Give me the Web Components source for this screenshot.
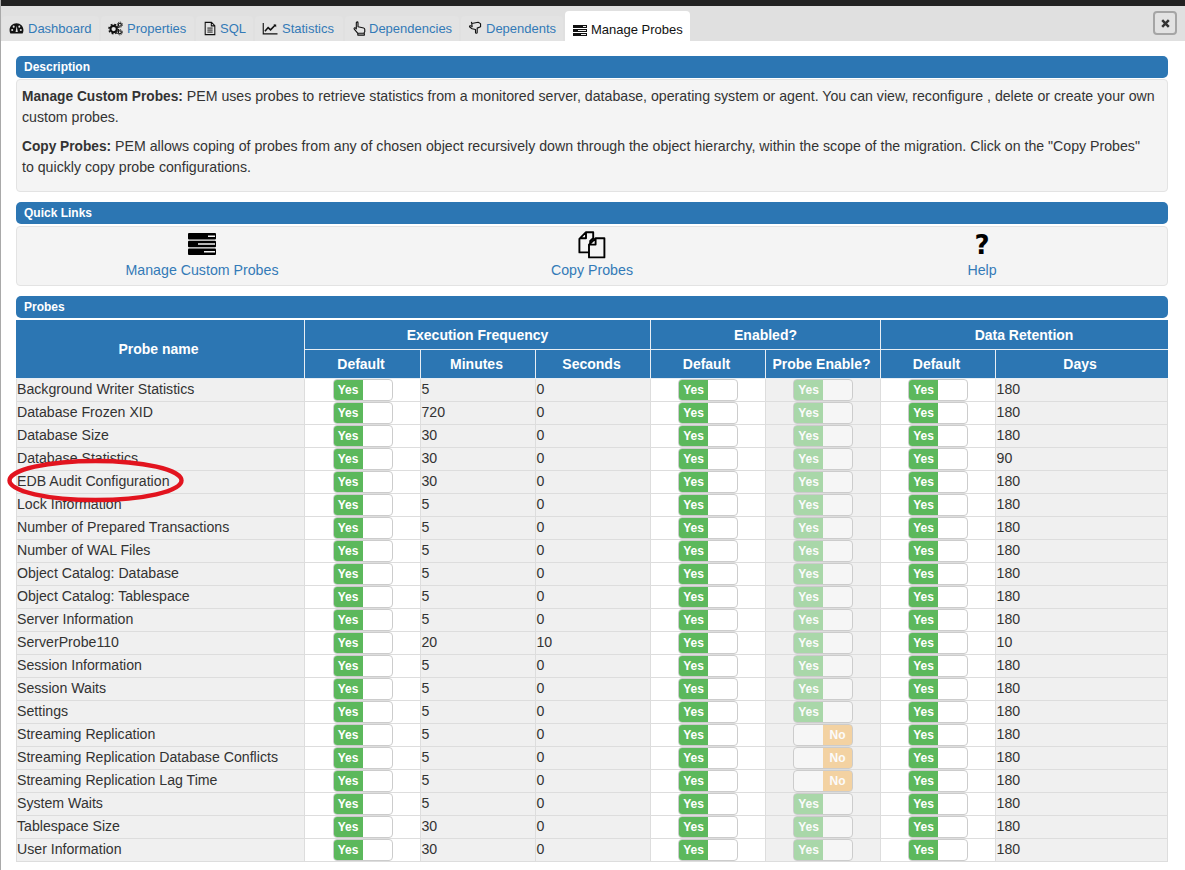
<!DOCTYPE html>
<html>
<head>
<meta charset="utf-8">
<title>Manage Probes</title>
<style>
html, body { margin: 0; padding: 0; background: #fff; }
body { font: 14px/20px "Liberation Sans", Arial, sans-serif; color: #333; }
info-box b { font-size: 13.72px; }
</style>
</head>
<body>
<probes-page>
  <tab-strip slot="tabs">
    <strip-tab icon="dashboard" w="97" t="26">Dashboard</strip-tab>
    <strip-tab icon="gears" w="93" t="26">Properties</strip-tab>
    <strip-tab icon="file" w="57" t="24">SQL</strip-tab>
    <strip-tab icon="chart" w="88" t="27">Statistics</strip-tab>
    <strip-tab icon="handup" w="114" t="24">Dependencies</strip-tab>
    <strip-tab icon="handdown" w="102" t="25">Dependents</strip-tab>
    <strip-tab icon="probes" w="125" t="26" active>Manage Probes</strip-tab>
  </tab-strip>

  <bar-title>Description</bar-title>
  <info-box class="desc">
    <p><b>Manage Custom Probes:</b> PEM uses probes to retrieve statistics from a monitored server, database, operating system or agent. You can view, reconfigure , delete or create your own custom probes.</p>
    <p><b>Copy Probes:</b> PEM allows coping of probes from any of chosen object recursively down through the object hierarchy, within the scope of the migration. Click on the "Copy Probes"<br>to quickly copy probe configurations.</p>
  </info-box>

  <bar-title>Quick Links</bar-title>
  <quick-links>
    <quick-link icon="probes">Manage Custom Probes</quick-link>
    <quick-link icon="copy">Copy Probes</quick-link>
    <quick-link icon="help">Help</quick-link>
  </quick-links>

  <bar-title>Probes</bar-title>
  <probe-table></probe-table>
</probes-page>

<script>
// small svg set shared by the tabs and the quick links
var ICONS = {
  dashboard: '<svg viewBox="0 0 16 16" width="15" height="15"><path d="M8 2.5C3.8 2.5.6 5.8.6 9.8c0 1.2.3 2.4.9 3.4h13c.6-1 .9-2.2.9-3.4 0-4-3.2-7.3-7.4-7.3z" fill="#111"/><circle cx="3.4" cy="9.6" r="1.1" fill="#e2e2e2"/><circle cx="5" cy="6" r="1.1" fill="#e2e2e2"/><circle cx="12.6" cy="9.6" r="1.1" fill="#e2e2e2"/><circle cx="11" cy="6" r="1.1" fill="#e2e2e2"/><path d="M7 11.8 8.2 5.4 9.4 11.8z" fill="#e2e2e2"/></svg>',
  gears: '<svg viewBox="0 0 16 16" width="15" height="15"><circle cx="6" cy="8.6" r="3.4" fill="none" stroke="#111" stroke-width="2.2"/><circle cx="6" cy="8.6" r="5" fill="none" stroke="#111" stroke-width="1.6" stroke-dasharray="2 1.93"/><circle cx="12.6" cy="4" r="1.6" fill="none" stroke="#111" stroke-width="1.3"/><circle cx="12.6" cy="4" r="2.8" fill="none" stroke="#111" stroke-width="1" stroke-dasharray="1.2 1"/><circle cx="12.6" cy="12" r="1.6" fill="none" stroke="#111" stroke-width="1.3"/><circle cx="12.6" cy="12" r="2.8" fill="none" stroke="#111" stroke-width="1" stroke-dasharray="1.2 1"/></svg>',
  file: '<svg viewBox="0 0 16 16" width="14" height="15"><path d="M2.5 1h7.2L13.5 4.8V15h-11z M9.5 1v4h4" fill="none" stroke="#111" stroke-width="1.2"/><path d="M5 7.5h6M5 9.8h6M5 12.1h6" stroke="#111" stroke-width="1.1"/></svg>',
  chart: '<svg viewBox="0 0 16 16" width="16" height="15"><path d="M.8 2v11.7H16" fill="none" stroke="#111" stroke-width="1.2"/><path d="M2.6 11 6 7l2.6 2.4L13.6 4.2" fill="none" stroke="#111" stroke-width="1.7"/><path d="M11.6 3.6h3v3z" fill="#111"/></svg>',
  handup: '<svg viewBox="0 0 16 16" width="15" height="15"><path d="M4.6 1.8c0-1.1 1.8-1.1 1.8 0v4.4l6 1.2c.9.2 1.2.8 1.2 1.6v2.4l-1 1.6H6L2.4 8.6c-.6-.9.6-1.9 1.4-1l.8.8z M6.2 13v2h7v-2" fill="none" stroke="#111" stroke-width="1.2" stroke-linejoin="round"/></svg>',
  handdown: '<svg viewBox="0 0 16 16" width="15" height="15"><path d="M4 2.6 10.8 1.4l2.6 1.4v3.4l-3.6 1.4v4.6c0 1.2-1.8 1.2-1.8 0V9L4.4 8.2 1.8 6.4C1.2 5.6 2 4.8 3 5.2L4.4 6z M4 2.6 3.6 1" fill="none" stroke="#111" stroke-width="1.2" stroke-linejoin="round"/></svg>',
  probes: '<svg viewBox="0 0 14 11" width="14" height="11"><path d="M0 0h14v3H0zM0 4h14v3H0zM0 8h14v3H0z" fill="#111"/><path d="M10 1h3v1h-3zM5 5h8v1H5zM8 9h5v1H8z" fill="#eee"/></svg>',
  bigprobes: '<svg viewBox="0 0 28 22" width="28" height="22"><rect width="28" height="6.4" y="0" rx="1"/><rect width="28" height="6.4" y="7.8" rx="1"/><rect width="28" height="6.4" y="15.6" rx="1"/><path d="M20 2.5h7v1.4h-7zM10 10.3h17v1.4H10zM16 18.1h11v1.4H16z" fill="#f4f4f4"/></svg>',
  copy: '<svg viewBox="0 0 28 28" width="28" height="28"><path d="M8 1.2h7.2v6l-3 2.8v11.4H1.4v-13.6z M8 1.2v6H1.8" fill="#f4f4f4" stroke="#000" stroke-width="1.9" stroke-linejoin="round"/><path d="M17.6 7.2h8.8v19.2H11V13.6z M17.6 7.2v6.4H11" fill="#f4f4f4" stroke="#000" stroke-width="1.9" stroke-linejoin="round"/></svg>'
};

function tpl(html) {
  var t = document.createElement('template');
  t.innerHTML = html;
  return t;
}

var PAGE_T = tpl('<style>'
  + ':host{display:block;width:1185px;height:870px;overflow:hidden;position:relative;box-sizing:border-box;border-left:1px solid #a9a9a9;background:#fff}'
  + '.top{height:6px;background:#222}'
  + '.content{padding:15px 17px 0 15px;display:flex;flex-direction:column}'
  + '.ring{position:absolute;left:0;top:455px;overflow:visible}'
  + '</style>'
  + '<div class="top"></div><slot name="tabs"></slot>'
  + '<div class="content"><slot></slot></div>'
  + '<svg class="ring" width="190" height="52"><ellipse cx="94.5" cy="25.5" rx="86" ry="19.5" fill="none" stroke="#e2141f" stroke-width="4.4"/></svg>');
customElements.define('probes-page', class extends HTMLElement {
  connectedCallback() {
    if (this.shadowRoot) return;
    this.attachShadow({ mode: 'open' }).appendChild(PAGE_T.content.cloneNode(true));
  }
});

var STRIP_T = tpl('<style>'
  + ':host{display:flex;height:35px;box-sizing:border-box;background:#e0e0e0;align-items:flex-end;padding-left:1px;gap:2px;position:relative}'
  + 'button{position:absolute;left:1152px;top:5px;width:24px;height:24px;box-sizing:border-box;padding:0;border:2px solid #a5a5a5;border-radius:4px;background:#e2e2e2;display:flex;align-items:center;justify-content:center}'
  + '</style><slot></slot>'
  + '<button><svg width="9" height="9" viewBox="0 0 9 9"><path d="M1.2 1.2l6.6 6.6M7.8 1.2 1.2 7.8" stroke="#333" stroke-width="2.5"/></svg></button>');
customElements.define('tab-strip', class extends HTMLElement {
  connectedCallback() {
    if (this.shadowRoot) return;
    this.attachShadow({ mode: 'open' }).appendChild(STRIP_T.content.cloneNode(true));
  }
});

customElements.define('strip-tab', class extends HTMLElement {
  connectedCallback() {
    if (this.shadowRoot) return;
    var on = this.hasAttribute('active');
    var slotW = (+this.getAttribute('t')) - 7;
    this.attachShadow({ mode: 'open' }).innerHTML = '<style>'
      + ':host{display:flex;align-items:center;box-sizing:border-box;padding-left:7px;'
      + 'width:' + this.getAttribute('w') + 'px;height:' + (on ? 30 : 25) + 'px;font-size:13px;'
      + 'border-radius:4px 4px 0 0;'
      + (on ? 'background:#fff;color:#111;padding-left:8px;padding-top:8px;' : 'background:#e3e3e3;color:#337ab7;')
      + 'white-space:nowrap}'
      + '.i{flex:none;width:' + (on ? slotW - 1 : slotW) + 'px}'
      + 'svg{display:block}</style>'
      + '<div class="i">' + (ICONS[this.getAttribute('icon')] || '') + '</div><span><slot></slot></span>';
  }
});

customElements.define('bar-title', class extends HTMLElement {
  connectedCallback() {
    if (this.shadowRoot) return;
    this.attachShadow({ mode: 'open' }).innerHTML = '<style>'
      + ':host{display:block;height:22px;line-height:22px;box-sizing:border-box;padding-left:8px;background:#2c76b3;color:#fff;'
      + 'font-size:12px;font-weight:bold;border-radius:5px}'
      + '</style><slot></slot>';
  }
});

customElements.define('info-box', class extends HTMLElement {
  connectedCallback() {
    if (this.shadowRoot) return;
    this.attachShadow({ mode: 'open' }).innerHTML = '<style>'
      + ':host{display:block;height:113px;box-sizing:border-box;margin:1px 0 10px;padding:6px 5px 0;background:#f4f4f4;'
      + 'border:1px solid #e3e3e3;border-radius:4px;line-height:20px;font-size:14.16px;color:#333}'
      + '::slotted(p){margin:0 0 9px}'
      + '</style><slot></slot>';
  }
});

customElements.define('quick-links', class extends HTMLElement {
  connectedCallback() {
    if (this.shadowRoot) return;
    this.attachShadow({ mode: 'open' }).innerHTML = '<style>'
      + ':host{display:grid;grid-template-columns:repeat(3,370px);column-gap:20px;justify-content:start;height:60px;box-sizing:border-box;margin:2px 0 10px;background:#f4f4f4;'
      + 'border:1px solid #e3e3e3;border-radius:4px}'
      + '</style><slot></slot>';
  }
});

customElements.define('quick-link', class extends HTMLElement {
  connectedCallback() {
    if (this.shadowRoot) return;
    var name = this.getAttribute('icon');
    var glyph = name === 'help' ? '<span class="q">?</span>' : name === 'probes' ? ICONS.bigprobes : ICONS[name];
    var drop = name === 'probes' ? 5 : name === 'copy' ? 1 : 0;
    this.attachShadow({ mode: 'open' }).innerHTML = '<style>'
      + ':host{display:flex;flex-direction:column;align-items:center;color:#337ab7;font-size:14.2px;line-height:20px}'
      + '.i{height:33px;box-sizing:border-box;display:flex;align-items:flex-end;justify-content:center;padding-bottom:' + drop + 'px}'
      + '.q{font:bold 26px/30px "DejaVu Sans",sans-serif;color:#000}'
      + 'svg{display:block}'
      + '</style><div class="i">' + glyph + '</div><span><slot></slot></span>';
  }
});

var SWITCH_T = tpl('<style>'
  + ':host{display:inline-flex;width:60px;height:22px;box-sizing:border-box;border:1px solid #ccc;border-radius:4px;overflow:hidden;background:#fff;vertical-align:top;font-size:12px;font-weight:bold;line-height:20px;color:#fff;text-align:center}'
  + ':host([disabled]){background:#f6f6f6}'
  + 'span{flex:1}'
  + '.y{background:#5cb85c;flex:0 0 29px}'
  + '.n{background:#f0ad4e}'
  + ':host([disabled]) .y,:host([disabled]) .n{opacity:.5}'
  + '</style>');
customElements.define('probe-switch', class extends HTMLElement {
  connectedCallback() {
    if (this.shadowRoot) return;
    var root = this.attachShadow({ mode: 'open' });
    root.appendChild(SWITCH_T.content.cloneNode(true));
    var off = this.getAttribute('value') === 'no';
    var wrap = document.createElement('template');
    wrap.innerHTML = off ? '<span></span><span class="n">No</span>' : '<span class="y">Yes</span><span></span>';
    root.appendChild(wrap.content);
  }
});

// name, minutes, seconds, probe enable, days
var PROBES = [
  ['Background Writer Statistics', 5, 0, 'yes', 180],
  ['Database Frozen XID', 720, 0, 'yes', 180],
  ['Database Size', 30, 0, 'yes', 180],
  ['Database Statistics', 30, 0, 'yes', 90],
  ['EDB Audit Configuration', 30, 0, 'yes', 180],
  ['Lock Information', 5, 0, 'yes', 180],
  ['Number of Prepared Transactions', 5, 0, 'yes', 180],
  ['Number of WAL Files', 5, 0, 'yes', 180],
  ['Object Catalog: Database', 5, 0, 'yes', 180],
  ['Object Catalog: Tablespace', 5, 0, 'yes', 180],
  ['Server Information', 5, 0, 'yes', 180],
  ['ServerProbe110', 20, 10, 'yes', 10],
  ['Session Information', 5, 0, 'yes', 180],
  ['Session Waits', 5, 0, 'yes', 180],
  ['Settings', 5, 0, 'yes', 180],
  ['Streaming Replication', 5, 0, 'no', 180],
  ['Streaming Replication Database Conflicts', 5, 0, 'no', 180],
  ['Streaming Replication Lag Time', 5, 0, 'no', 180],
  ['System Waits', 5, 0, 'yes', 180],
  ['Tablespace Size', 30, 0, 'yes', 180],
  ['User Information', 30, 0, 'yes', 180]
];

customElements.define('probe-table', class extends HTMLElement {
  connectedCallback() {
    if (this.shadowRoot) return;
    var on = '<probe-switch value="yes"></probe-switch>';
    var rows = PROBES.map(function (p) {
      return '<tr><td class="g first">' + p[0] + '</td>'
        + '<td class="c">' + on + '</td><td class="g">' + p[1] + '</td><td class="g">' + p[2] + '</td>'
        + '<td class="c">' + on + '</td>'
        + '<td class="c g"><probe-switch disabled value="' + p[3] + '"></probe-switch></td>'
        + '<td class="c">' + on + '</td><td class="g">' + p[4] + '</td></tr>';
    }).join('');
    this.attachShadow({ mode: 'open' }).innerHTML = '<style>'
      + ':host{display:block;margin-top:2px}'
      + 'table{border-collapse:collapse;table-layout:fixed;width:1151px;font-size:14.15px;color:#333}'
      + 'th{background:#2c76b3;color:#fff;font-weight:bold;font-size:14px;border:1px solid #e8eef4;padding:0;text-align:center;line-height:20px}'
      + 'thead tr{height:29px}'
      + 'thead tr:first-child th{border-top-color:#2c76b3}'
      + 'thead th:first-child{border-left-color:#2c76b3}'
      + 'thead th:last-child{border-right-color:#2c76b3}'
      + 'thead tr:nth-child(2) th{padding-right:3px}'
      + 'th.name{padding:0 4px 2px 0}'
      + 'td{height:22px;padding:0 0 0 .5px;border:1px solid #ddd;background:#fff;line-height:20px;white-space:nowrap;overflow:hidden;vertical-align:top}'
      + 'td.first{padding-left:0}'
      + 'td.g{background:#f0f0f0}'
      + 'td.c{text-align:center;padding:0;line-height:0}'
      + '</style><table><colgroup>'
      + '<col style="width:288px"><col style="width:116px"><col style="width:115px"><col style="width:115px">'
      + '<col style="width:115px"><col style="width:115px"><col style="width:115px"><col style="width:172px">'
      + '</colgroup><thead><tr><th class="name" rowspan="2">Probe name</th><th colspan="3">Execution Frequency</th><th colspan="2">Enabled?</th><th colspan="2">Data Retention</th></tr>'
      + '<tr><th>Default</th><th>Minutes</th><th>Seconds</th><th>Default</th><th>Probe Enable?</th><th>Default</th><th>Days</th></tr></thead>'
      + '<tbody>' + rows + '</tbody></table>';
  }
});
</script>
</body>
</html>
